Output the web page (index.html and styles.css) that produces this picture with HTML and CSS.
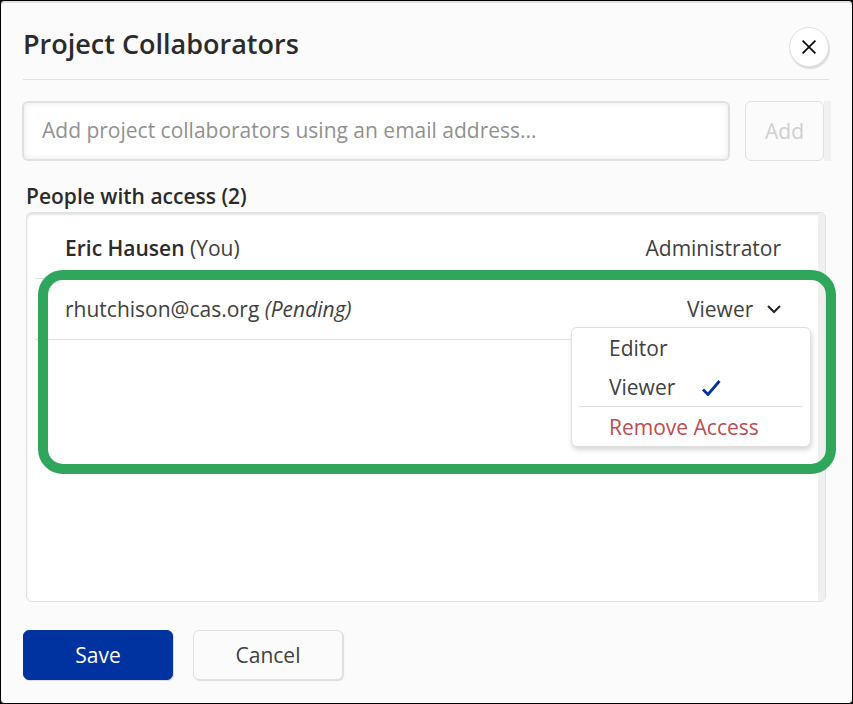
FILE: index.html
```html
<!DOCTYPE html>
<html lang="en">
<head>
    <meta charset="UTF-8">
    <meta name="viewport" content="width=device-width, initial-scale=1.0">
    <title>Project Collaborators</title>
    <link rel="stylesheet" href="styles.css">
</head>
<body>

<main class="dialog">
    <header class="dialog-header">
        <h1>Project Collaborators</h1>
        <button type="button" class="close-btn" aria-label="Close">
            <svg width="14" height="14" viewBox="0 0 14 14" fill="none" stroke="#000" stroke-width="1.7">
                <path d="M.6 .6L13.4 13.4M13.4 .6L.6 13.4"/>
            </svg>
        </button>
    </header>

    <form class="add-form">
        <input type="email" id="email" class="email-input" aria-label="Email address" placeholder="Add project collaborators using an email address...">
        <button type="button" class="add-btn" disabled>Add</button>
        <div class="track"></div>
    </form>

    <h2>People with access (2)</h2>
    <div class="people">
        <ul class="people-list">
            <li class="person">
                <span><strong>Eric Hausen</strong> (You)</span>
                <span>Administrator</span>
            </li>
            <li class="person">
                <label for="role">rhutchison@cas.org <em>(Pending)</em></label>
                <div class="role">
                    <select id="role" class="role-select">
                        <option>Editor</option>
                        <option selected>Viewer</option>
                    </select>
                    <svg class="chevron" width="14" height="10" viewBox="0 0 14 10" fill="none" stroke="#222" stroke-width="2">
                        <path d="M1 2L7 8L13 2"/>
                    </svg>
                </div>
                <div class="menu">
                    <button type="button" class="menu-item">Editor</button>
                    <button type="button" class="menu-item">Viewer
                        <svg width="20" height="18" viewBox="0 0 20 18" fill="none" stroke="#0032a0" stroke-width="2.8">
                            <path d="M2 11.5L7 16.5L18.5 3"/>
                        </svg>
                    </button>
                    <button type="button" class="menu-item remove">Remove Access</button>
                </div>
                <div class="highlight"></div>
            </li>
        </ul>
        <div class="track"></div>
    </div>

    <footer class="actions">
        <button type="button" class="btn save">Save</button>
        <button type="button" class="btn cancel">Cancel</button>
    </footer>
</main>

</body>
</html>
```
FILE: styles.css
```css
* {
    box-sizing: border-box;
}
body {
    margin: 0;
    background: #000;
    color: #404040;
    font-family: "Open Sans", "Noto Sans", sans-serif;
    font-size: 21px;
    font-weight: 400;
    line-height: 30px;
}
button,
input,
select {
    font: inherit;
    color: inherit;
}
button {
    padding: 0;
    cursor: pointer;
}
.dialog {
    display: flex;
    flex-direction: column;
    min-height: 100vh;
    padding: 24px 23px 23px 22px;
    border: 1px solid #000;
    border-radius: 4px;
    background: #fbfbfb;
    box-shadow: inset 0 2px 0 #e2e2e2;
}
.dialog-header {
    display: flex;
    justify-content: space-between;
    align-items: flex-start;
    height: 55px;
    border-bottom: 1px solid #e0e0e0;
}
h1,
h2 {
    margin: 0;
    color: #2b2b2b;
    font-weight: 600;
}
h1 {
    font-size: 27px;
    line-height: 38px;
}
h2 {
    padding: 20px 3px 0;
    font-size: 21px;
    line-height: 31px;
}
.close-btn {
    display: flex;
    align-items: center;
    justify-content: center;
    width: 40px;
    height: 40px;
    margin-top: 2px;
    border: 1px solid #e0e0e0;
    border-radius: 50%;
    background: #fff;
    box-shadow: 1px 2px 1px #ddd;
}
.add-form {
    display: flex;
    margin: 21px -2px 0 -1px;
}
.email-input {
    flex: 1;
    min-width: 0;
    height: 60px;
    margin-right: 15px;
    padding: 0 18px 2px;
    border: 2px solid #e0e0e0;
    border-radius: 6px;
    background: #fff;
    box-shadow: inset 0 0 6px #e8e8e8;
}
.email-input::placeholder {
    color: #919191;
    opacity: 1;
}
.add-btn {
    width: 79px;
    border: 1px solid #e0e0e0;
    border-radius: 6px;
    background: #fbfbfb;
    color: #d0d0d0;
}
.track {
    width: 7px;
    background: #f0f0f0;
}
.people {
    display: flex;
    flex: 1;
    min-height: 280px;
    margin: 0 3px;
    border: 1px solid #e0e0e0;
    border-radius: 6px;
    background: #fff;
    box-shadow: inset 0 2px 2px #e4e4e4;
}
.people .track {
    border-radius: 0 5px 5px 0;
}
.people-list {
    flex: 1;
    margin: 0;
    padding: 5px 7px 5px 8px;
    list-style: none;
}
.person {
    display: flex;
    justify-content: space-between;
    align-items: center;
    position: relative;
    height: 61px;
    padding: 0 30px;
    border-bottom: 1px solid #e0e0e0;
}
.person strong {
    color: #2b2b2b;
    font-weight: 600;
}
.role {
    position: relative;
}
.role-select {
    display: block;
    padding: 0 27px 0 0;
    border: 0;
    background: transparent;
    appearance: none;
}
.chevron {
    position: absolute;
    top: 10px;
    right: 0;
}
.menu {
    position: absolute;
    top: 48px;
    right: 0;
    z-index: 1;
    width: 240px;
    padding: 0 8px 0 7px;
    border: 1px solid #e0e0e0;
    border-radius: 6px;
    background: #fff;
    box-shadow: 1px 3px 5px #d8d8d8;
}
.menu-item {
    display: flex;
    align-items: center;
    gap: 26px;
    width: 100%;
    height: 39px;
    padding: 0 30px;
    border: 0;
    background: none;
}
.remove {
    height: 40px;
    border-top: 1px solid #e0e0e0;
    color: #bd4b50;
}
.highlight {
    position: absolute;
    top: -9px;
    right: -25px;
    left: 3px;
    height: 204px;
    border: 10px solid #2fa65c;
    border-radius: 25px;
    pointer-events: none;
}
.actions {
    display: flex;
    gap: 20px;
    margin-top: 28px;
}
.btn {
    width: 150px;
    height: 50px;
    border: 1px solid #e0e0e0;
    border-radius: 6px;
    background: #fbfbfb;
    box-shadow: 1px 1px 1px #ddd;
}
.save {
    border-color: #0032a0;
    background: #0032a0;
    color: #fff;
}
```
